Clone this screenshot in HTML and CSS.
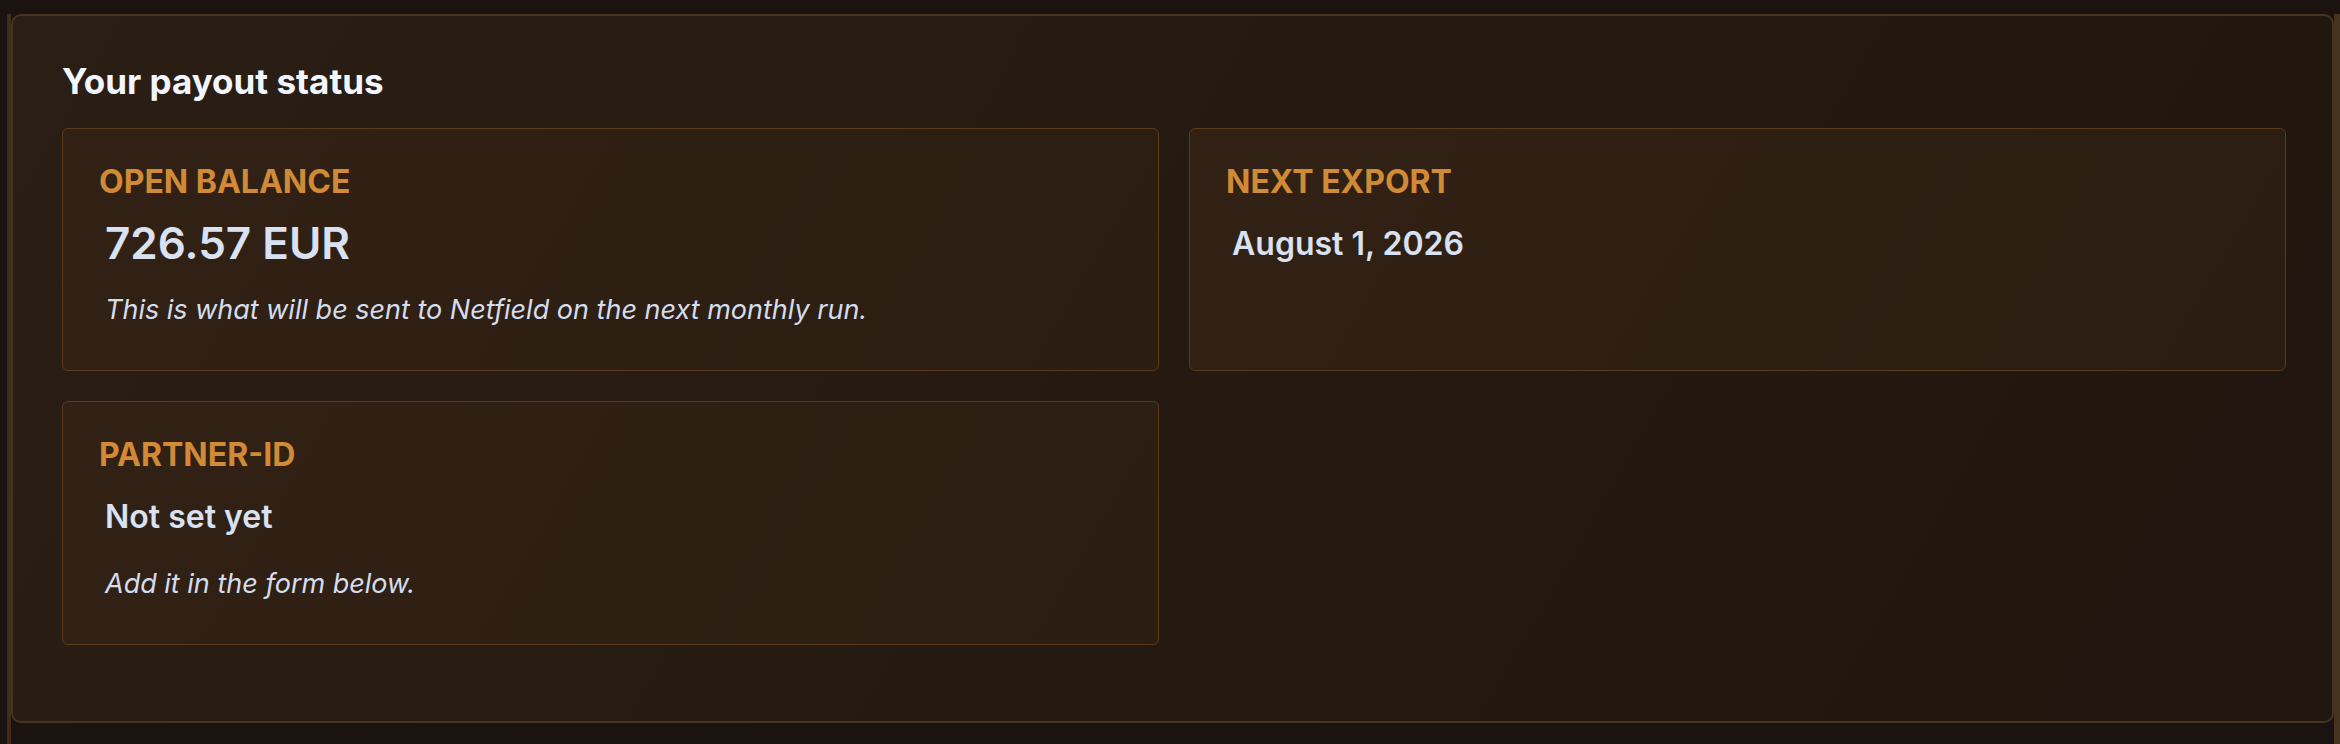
FILE: index.html
```html
<!DOCTYPE html>
<html lang="en">
<head>
<meta charset="utf-8">
<title>Your payout status</title>
<link rel="stylesheet" href="styles.css">
</head>
<body>
<div class="frame">
  <section class="panel">
    <h2 class="panel-title">Your payout status</h2>
    <div class="stats">
      <div class="stat">
        <div class="stat-label">OPEN BALANCE</div>
        <div class="stat-value stat-value--big">726.57 EUR</div>
        <p class="stat-note">This is what will be sent to Netfield on the next monthly run.</p>
      </div>
      <div class="stat">
        <div class="stat-label">NEXT EXPORT</div>
        <div class="stat-value">August 1, 2026</div>
      </div>
      <div class="stat">
        <div class="stat-label">PARTNER-ID</div>
        <div class="stat-value">Not set yet</div>
        <p class="stat-note stat-note--far">Add it in the form below.</p>
      </div>
    </div>
  </section>
</div>
</body>
</html>
```

FILE: styles.css
```css
html, body {
  margin: 0;
  padding: 0;
  height: 100%;
}

body {
  background: #1b1310;
  font-family: Inter, "Noto Sans", "Liberation Sans", sans-serif;
  overflow: hidden;
}

.frame {
  margin-left: 7px;
  min-height: 744px;
  border-left: 4px solid #3f2d1d;
  border-right: 6px solid #45331f;
  background: #1b1310;
}

.panel {
  margin: 14px 0 0 0;
  height: 709px;
  box-sizing: border-box;
  border: 2px solid #47331f;
  border-radius: 10px;
  background: linear-gradient(120deg, #2b1e14 0%, #251a11 50%, #20160f 100%);
  padding: 43px 46px 0 49px;
}

.panel-title {
  margin: 0 0 25px 0;
  font-size: 35px;
  line-height: 44px;
  font-weight: 700;
  color: #f1f6ff;
}

.stats {
  display: grid;
  grid-template-columns: 1fr 1fr;
  column-gap: 30px;
  row-gap: 30px;
  align-items: stretch;
}

.stat {
  border: 1px solid #5a3b1c;
  border-radius: 6px;
  background: linear-gradient(120deg, #322115 0%, #2e1f13 60%, #2b1d12 100%);
  padding: 34px 36px 44px 36px;
}

.stat-label {
  font-size: 32px;
  line-height: 38px;
  font-weight: 700;
  color: #d18a36;
}

.stat-value {
  margin-top: 24px;
  padding-left: 6px;
  font-size: 32px;
  line-height: 38px;
  font-weight: 600;
  color: #d9e2f3;
}

.stat-value--big {
  margin-top: 15px;
  font-size: 44px;
  line-height: 54px;
}

.stat-note {
  margin: 24px 0 0 0;
  padding-left: 6px;
  font-size: 27px;
  line-height: 32px;
  font-style: italic;
  color: #d3ddee;
}

.stat-note--far {
  margin-top: 32px;
}
```
